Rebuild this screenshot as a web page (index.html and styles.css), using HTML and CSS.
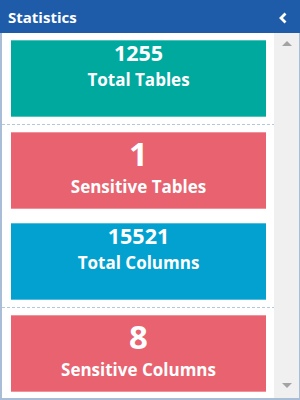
FILE: index.html
```html
<!DOCTYPE html>
<html lang="en">
<head>
  <meta charset="UTF-8">
  <meta name="viewport" content="width=device-width, initial-scale=1.0">
  <title>Statistics</title>
  <link rel="stylesheet" href="styles.css">
</head>
<body>

  <div class="panel">
    <!-- Panel header -->
    <div class="panel-header">
      <span class="panel-title">Statistics</span>
      <svg class="collapse-icon" width="10" height="12" viewBox="0 0 10 12">
        <polyline points="7.5,1.5 3,6 7.5,10.5" fill="none" stroke="#fff" stroke-width="2.8"/>
      </svg>
    </div>

    <!-- Panel body with stat cards -->
    <div class="panel-body">
      <div class="stats">
        <div class="stat-group">
          <div class="stat-card teal">
            <div class="stat-value">1255</div>
            <div class="stat-label">Total Tables</div>
          </div>
        </div>

        <div class="stat-group">
          <div class="stat-card red big">
            <div class="stat-value">1</div>
            <div class="stat-label">Sensitive Tables</div>
          </div>
          <div class="stat-card blue">
            <div class="stat-value">15521</div>
            <div class="stat-label">Total Columns</div>
          </div>
        </div>

        <div class="stat-group">
          <div class="stat-card red big">
            <div class="stat-value">8</div>
            <div class="stat-label">Sensitive Columns</div>
          </div>
        </div>
      </div>

      <!-- Fake scrollbar -->
      <div class="scrollbar">
        <span class="arrow-up"></span>
        <span class="arrow-down"></span>
      </div>
    </div>
  </div>

</body>
</html>
```

FILE: styles.css
```css
body {
  margin: 0;
  font-family: "Open Sans", "DejaVu Sans", sans-serif;
  background-color: #fff;
}

.panel {
  width: 300px;
  height: 400px;
  display: flex;
  flex-direction: column;
}

.panel-header {
  height: 33px;
  flex-shrink: 0;
  background-color: #1e5ba8;
  color: #fff;
  display: flex;
  align-items: center;
  justify-content: space-between;
  padding: 0 12px 0 8px;
}

.panel-title {
  font-size: 15px;
  font-weight: 700;
}

.collapse-icon {
  display: block;
  margin-top: 2px;
}

.panel-body {
  flex: 1;
  display: flex;
  border-left: 2px solid #a9bdd6;
  border-right: 1px solid #a9bdd6;
  border-bottom: 2px solid #a9bdd6;
  overflow: hidden;
}

.stats {
  flex: 1;
}

.stat-group {
  display: flex;
  flex-direction: column;
  gap: 14px;
  padding: 7px 8px 7px 9px;
}

.stat-group:not(:last-child) {
  padding-bottom: 8px;
  background: repeating-linear-gradient(90deg, #b4c7dc 0 3px, transparent 3px 5px) bottom / 100% 1px no-repeat;
}

.stat-card {
  height: 77px;
  box-sizing: border-box;
  border-top: 1px solid rgba(255, 255, 255, 0.3);
  border-bottom: 1px solid rgba(255, 255, 255, 0.3);
  color: #fff;
  text-align: center;
  font-weight: 700;
}

.stat-value {
  font-size: 21.5px;
  line-height: 30px;
  margin-top: -3px;
}

.stat-label {
  font-size: 17px;
  line-height: 24px;
}

.stat-card.big {
  padding-top: 4px;
}

.stat-card.big .stat-value {
  font-size: 33px;
  line-height: 34px;
  margin-top: 0;
}

.stat-card.big .stat-label {
  line-height: 20px;
  margin-top: 6px;
}

.teal {
  background-color: #00a99e;
}

.red {
  background-color: #e8636f;
}

.blue {
  background-color: #03a1cf;
}

.scrollbar {
  width: 25px;
  background-color: #f0f0f0;
  display: flex;
  flex-direction: column;
  justify-content: space-between;
  align-items: center;
  padding: 8px 0 10px;
  box-sizing: border-box;
}

.arrow-up,
.arrow-down {
  width: 0;
  height: 0;
  border-left: 5px solid transparent;
  border-right: 5px solid transparent;
}

.arrow-up {
  border-bottom: 5px solid #a3a3a3;
}

.arrow-down {
  border-top: 5px solid #a3a3a3;
}
```
